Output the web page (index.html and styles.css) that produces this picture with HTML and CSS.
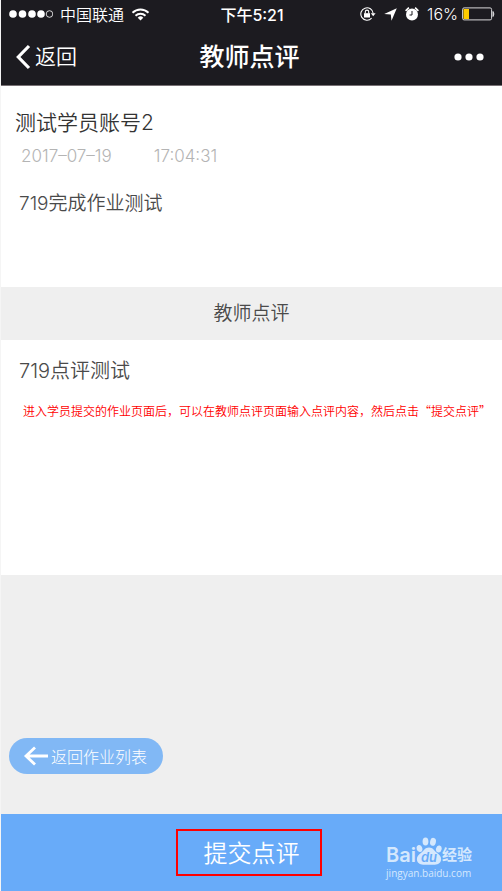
FILE: index.html
```html
<!DOCTYPE html>
<html lang="zh-CN">
<head>
<meta charset="utf-8">
<meta name="viewport" content="width=device-width, initial-scale=1">
<title>教师点评</title>
<link rel="stylesheet" href="styles.css">
</head>
<body>
<header class="top">
  <div class="status">
    <div class="status-left">
      <svg width="44" height="10" viewBox="0 0 44 10" fill="#fff" aria-hidden="true"><circle cx="4" cy="5" r="3.800"/><circle cx="13.500" cy="5" r="3.800"/><circle cx="23" cy="5" r="3.800"/><circle cx="32" cy="5" r="3.800"/><circle cx="40.500" cy="5" r="3.300" fill="none" stroke="#fff" stroke-width=".8"/></svg>
      <span>中国联通</span>
      <svg width="19" height="13" viewBox="0 0 19 13" fill="none" stroke="#fff" stroke-width="1.900" aria-hidden="true"><path d="M1.500 4.800a11.500 11.500 0 0 1 16 0M4.500 7.700a7.300 7.300 0 0 1 10 0"/><path d="M9.500 12.500 6.700 9.700a4 4 0 0 1 5.600 0z" fill="#fff" stroke="none"/></svg>
    </div>
    <time class="clock">下午5:21</time>
    <div class="status-right">
      <svg width="16" height="14" viewBox="0 0 16 14" fill="none" stroke="#fff" aria-hidden="true"><path d="M11.600 11.200A6.200 6.200 0 1 1 13.200 6.500" stroke-width="1.100"/><path d="M10.800 6.200h4.800l-2.400 3z" fill="#fff" stroke="none"/><rect x="4" y="6.200" width="6" height="4.300" fill="#fff" stroke="none"/><path d="M5.300 6.500V4.800a1.700 1.700 0 0 1 3.400 0v1.700" stroke-width="1.100"/></svg>
      <svg width="13" height="13" viewBox="0 0 13 13" fill="#fff" aria-hidden="true"><path d="M12.800.2 7.500 12.800 6.800 6.500.2 6z"/></svg>
      <svg width="14" height="14" viewBox="0 0 14 14" aria-hidden="true"><circle cx="7" cy="7.500" r="6" fill="#fff"/><path d="M.6 3.800 3.900.7M13.400 3.800 10.100.7" stroke="#fff" stroke-width="1.600"/><path d="M7 4v4H4.500" fill="none" stroke="#1c1b20" stroke-width="1"/></svg>
      <span class="percent">16%</span>
      <svg width="33" height="14" viewBox="0 0 33 14" aria-hidden="true"><rect x=".6" y=".9" width="29" height="12" rx="1.500" fill="none" stroke="#d8d8da"/><rect x="1.500" y="2" width="5.500" height="10" fill="#fc0"/><path d="M31 4.500q1.800 2.500 0 5z" fill="#d8d8da" stroke="#d8d8da"/></svg>
    </div>
  </div>
  <nav class="nav">
    <a class="nav-back" href="#"><svg width="16" height="26" viewBox="0 0 16 26" fill="none" stroke="#fff" stroke-width="3.200" aria-hidden="true"><path d="M14 2 3.300 13 14 24"/></svg>返回</a>
    <h1>教师点评</h1>
    <button class="more" type="button" aria-label="更多"><svg width="30" height="8" viewBox="0 0 30 8" fill="#fff" aria-hidden="true"><circle cx="4" cy="4" r="3.600"/><circle cx="15" cy="4" r="3.600"/><circle cx="26" cy="4" r="3.600"/></svg></button>
  </nav>
</header>
<main class="content">
  <section class="homework">
    <h2>测试学员账号2</h2>
    <div class="date"><time>2017–07–19</time><time>17:04:31</time></div>
    <p>719完成作业测试</p>
  </section>
  <label class="heading" for="review">教师点评</label>
  <section class="review">
    <textarea id="review" rows="1">719点评测试</textarea>
    <p class="hint">进入学员提交的作业页面后，可以在教师点评页面输入点评内容，然后点击“提交点评”</p>
  </section>
  <div class="actions">
    <a class="list-link" href="#"><svg width="26" height="20" viewBox="0 0 26 20" fill="none" stroke="#fff" stroke-width="2.800" aria-hidden="true"><path d="M12 1.500 3 10l9 8.500M3 10h22"/></svg>返回作业列表</a>
  </div>
</main>
<footer class="footer">
  <button class="submit" type="button">提交点评</button>
  <div class="brand">
    <div class="brand-name"><b>Bai</b><svg width="26" height="28" viewBox="0 0 26 28" aria-hidden="true"><g fill="#d5e8fd"><ellipse cx="3.500" cy="11.500" rx="2.800" ry="3.600" transform="rotate(-15 3.500 11.500)"/><ellipse cx="9.500" cy="4.500" rx="2.900" ry="4"/><ellipse cx="17" cy="4.800" rx="2.900" ry="4" transform="rotate(12 17 4.800)"/><ellipse cx="22.800" cy="12" rx="2.800" ry="3.500" transform="rotate(15 22.800 12)"/><path d="M13 10.500c4 0 5 3.200 7.800 5.200 3.500 2.500 5 5 4 8.200C23.300 28.500 17 27.800 13 27.800S2.700 28.500 1.200 23.900c-1-3.200.5-5.700 4-8.200C8 13.700 9 10.500 13 10.500z"/></g><text class="paw-text" x="13" y="25" text-anchor="middle">du</text></svg><b class="brand-cn">经验</b></div>
    <span class="brand-url">jingyan.baidu.com</span>
  </div>
</footer>
</body>
</html>
```
FILE: styles.css
```css
* { box-sizing: border-box; }

body {
  margin: 0;
  min-height: 100vh;
  display: flex;
  flex-direction: column;
  border-left: 1px solid #f5f5f5;
  background: #efefef;
  color: #4a4a4a;
  font-family: Inter, "Noto Sans CJK SC", sans-serif;
  font-weight: 350;
}

h1, h2, p { margin: 0; }
a { color: inherit; text-decoration: none; }
svg { display: block; flex: none; }
button { border: 0; padding: 0; background: none; color: inherit; font: inherit; }

.top {
  background: #1c1b20;
  color: #fff;
  border-bottom: 1px solid #777074;
}

.status, .nav {
  display: grid;
  grid-template-columns: 1fr auto 1fr;
  align-items: center;
}

.status {
  height: 28px;
  padding: 0 7px 0 8px;
  font-size: 16px;
}

.status-left, .status-right { display: flex; align-items: center; }
.status-left { gap: 7px; }
.status-right { justify-content: flex-end; gap: 8px; }
.percent { margin-right: -4px; }
.clock { font-weight: 500; }

.nav {
  height: 57px;
  padding: 0 18px 0 14px;
}

.nav h1 { font-size: 25px; font-weight: 500; line-height: 36px; }

.nav-back {
  display: flex;
  align-items: center;
  gap: 4px;
  font-size: 21px;
  line-height: 28px;
}

.more { justify-self: end; }

.content { flex: 1; display: flex; flex-direction: column; }

.homework {
  min-height: 201px;
  padding: 20px 14px;
  background: #fff;
}

.homework h2 {
  color: #333;
  font-size: 21px;
  font-weight: 350;
  line-height: 34px;
}

.date {
  display: flex;
  gap: 42px;
  padding: 4px 6px;
  color: #b4b4b4;
  font-size: 17px;
  font-weight: 300;
  line-height: 24px;
}

.homework p { padding: 18px 4px; font-size: 19px; line-height: 28px; }

.heading {
  height: 53px;
  font-size: 19px;
  line-height: 54px;
  text-align: center;
}

.review {
  min-height: 235px;
  padding: 17px 0 17px 18px;
  background: #fff;
}

.review textarea {
  display: block;
  width: 100%;
  height: 28px;
  padding: 0;
  border: 0;
  outline: 0;
  resize: none;
  overflow: hidden;
  background: none;
  color: inherit;
  font: inherit;
  font-size: 20px;
  line-height: 28px;
}

.hint {
  padding: 17px 4px;
  color: #f00;
  font-family: "Noto Sans CJK SC", sans-serif;
  font-size: 12px;
  line-height: 18px;
}

.actions {
  flex: 1;
  display: flex;
  align-items: flex-end;
  padding: 20px 8px 40px;
}

.list-link {
  display: flex;
  align-items: center;
  gap: 2px;
  height: 36px;
  padding: 0 16px 0 14px;
  border-radius: 18px;
  background: #81b8f5;
  color: #fff;
  font-size: 16px;
  font-weight: 300;
}

.footer {
  display: grid;
  grid-template-columns: 1fr auto 1fr;
  align-items: center;
  height: 77px;
  padding-right: 6px;
  background: #68abf9;
  color: #fff;
}

.submit {
  grid-column: 2;
  height: 47px;
  padding: 0 20px 2px 26px;
  border: 2px solid #f00;
  font-size: 24px;
}

.brand {
  justify-self: end;
  padding: 12px 24px 0 0;
  color: #d5e8fd;
}

.brand-name {
  display: flex;
  align-items: flex-end;
  font-size: 20px;
  line-height: 20px;
}

.brand-name b { font-weight: 600; }
.brand-name .brand-cn { font-size: 15px; }
.paw-text { fill: #68abf9; font-size: 13px; font-style: italic; font-weight: 600; }

.brand-url {
  display: block;
  font-family: "Open Sans", sans-serif;
  font-size: 10px;
  font-weight: 400;
  line-height: 16px;
}
```
